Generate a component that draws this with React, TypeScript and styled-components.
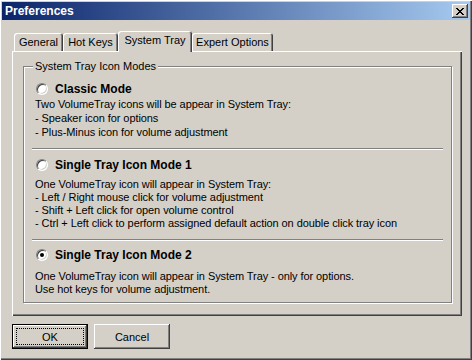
import React from "react";
import styled, { createGlobalStyle } from "styled-components";

const GlobalStyle = createGlobalStyle`
  html, body { margin: 0; padding: 0; background: #d4d0c8; }
  body {
    font-family: "Liberation Sans", Arial, sans-serif;
    font-size: 11px;
    color: #000;
  }
  * { box-sizing: border-box; }
`;

const Window = styled.div`
  width: 472px;
  height: 360px;
  padding: 2px;
  background: #d4d0c8;
  box-shadow: inset 1px 1px #ffffff, inset -1px -1px #404040, inset -2px -2px #808080;
  display: flex;
  flex-direction: column;
`;

const TitleBar = styled.div`
  height: 18px;
  flex: none;
  display: flex;
  align-items: center;
  justify-content: space-between;
  padding: 0 2px 0 3px;
  background: linear-gradient(to right, #0a246a, #a6caf0);
  color: #ffffff;
  font-weight: bold;
  font-size: 12px;
`;

const CloseButton = styled.div`
  width: 16px;
  height: 14px;
  background: #d4d0c8;
  display: flex;
  align-items: center;
  justify-content: center;
  box-shadow: inset -1px -1px #404040, inset 1px 1px #ffffff, inset -2px -2px #808080;
`;

const Body = styled.div`
  flex: 1;
  display: flex;
  flex-direction: column;
  padding: 11px 8px 0 10px;
`;

const TabRow = styled.div`
  display: flex;
  align-items: flex-end;
  height: 20px;
  padding-left: 2px;
  position: relative;
  z-index: 1;
`;

const Tab = styled.div<{ $active?: boolean; $w: number }>`
  width: ${(p) => p.$w}px;
  height: ${(p) => (p.$active ? 21 : 18)}px;
  margin-bottom: ${(p) => (p.$active ? -1 : 0)}px;
  padding-bottom: ${(p) => (p.$active ? 3 : 0)}px;
  background: #d4d0c8;
  border-radius: 3px 3px 0 0;
  box-shadow: inset 1px 1px #ffffff, inset -1px 0 #404040, inset -2px 0 #808080;
  display: flex;
  align-items: center;
  justify-content: center;
  white-space: nowrap;
`;

const Panel = styled.div`
  height: 265px;
  flex: none;
  padding: 15px 0 0 11px;
  box-shadow: inset 1px 1px #ffffff, inset -1px -1px #404040, inset -2px -2px #808080;
`;

const GroupBox = styled.div`
  position: relative;
  width: 429px;
  height: 237px;
  border: 1px solid #808080;
  box-shadow: inset 1px 1px #ffffff, 1px 1px 0 #ffffff;
  padding: 0 8px;
  display: flex;
  flex-direction: column;
`;

const GroupLabel = styled.div`
  position: absolute;
  top: -8px;
  left: 9px;
  padding: 0 2px;
  line-height: 14px;
  background: #d4d0c8;
  white-space: nowrap;
`;

const OptionRow = styled.div<{ $mt: number }>`
  display: flex;
  align-items: center;
  gap: 7px;
  height: 14px;
  margin-top: ${(p) => p.$mt}px;
  padding-left: 4px;
`;

const Radio = styled.span<{ $checked?: boolean }>`
  position: relative;
  width: 12px;
  height: 12px;
  flex: none;
  border-radius: 50%;
  border: 1px solid;
  border-color: #808080 #ffffff #ffffff #808080;
  background: #ffffff;
  box-shadow: inset 1px 1px #404040, inset -1px -1px #d4d0c8;
  &::after {
    content: "";
    display: ${(p) => (p.$checked ? "block" : "none")};
    position: absolute;
    left: 3px;
    top: 3px;
    width: 4px;
    height: 4px;
    border-radius: 50%;
    background: #000000;
  }
`;

const OptionLabel = styled.span`
  font-weight: bold;
  font-size: 12px;
  white-space: nowrap;
`;

const Desc = styled.div<{ $mt: number; $lh: number }>`
  margin-top: ${(p) => p.$mt}px;
  padding-left: 3px;
  line-height: ${(p) => p.$lh}px;
  letter-spacing: -0.08px;
  white-space: nowrap;
`;

const Separator = styled.div<{ $mt: number }>`
  height: 2px;
  margin-top: ${(p) => p.$mt}px;
  border-top: 1px solid #808080;
  border-bottom: 1px solid #ffffff;
`;

const ButtonRow = styled.div`
  display: flex;
  gap: 6px;
  margin-top: 8px;
`;

const Button = styled.button<{ $default?: boolean }>`
  position: relative;
  width: 76px;
  height: 25px;
  padding: 0;
  font-family: inherit;
  font-size: 11px;
  color: #000;
  background: #d4d0c8;
  border: ${(p) => (p.$default ? "1px solid #000000" : "none")};
  box-shadow: inset -1px -1px #404040, inset 1px 1px #ffffff, inset -2px -2px #808080;
  &::after {
    content: "";
    display: ${(p) => (p.$default ? "block" : "none")};
    position: absolute;
    inset: 3px;
    border: 1px dotted #000000;
  }
`;

const CloseGlyph = () => {
  const rows = [
    "XX....XX",
    ".XX..XX.",
    "..XXXX..",
    "...XX...",
    "..XXXX..",
    ".XX..XX.",
    "XX....XX",
  ];
  return (
    <svg width="8" height="7" viewBox="0 0 8 7" shapeRendering="crispEdges">
      {rows.flatMap((r, y) =>
        r.split("").map((c, x) =>
          c === "X" ? <rect key={`${x}-${y}`} x={x} y={y} width="1" height="1" fill="#000" /> : null
        )
      )}
    </svg>
  );
};

type Mode = {
  label: string;
  checked?: boolean;
  rowMt: number;
  descMt: number;
  lh: number;
  sepMt?: number;
  lines: string[];
};

const modes: Mode[] = [
  {
    label: "Classic Mode",
    rowMt: 15,
    descMt: 1,
    lh: 14,
    lines: [
      "Two VolumeTray icons will be appear in System Tray:",
      "- Speaker icon for options",
      "- Plus-Minus icon for volume adjustment",
    ],
  },
  {
    label: "Single Tray Icon Mode 1",
    sepMt: 9,
    rowMt: 8,
    descMt: 6,
    lh: 13,
    lines: [
      "One VolumeTray icon will appear in System Tray:",
      "- Left / Right mouse click for volume adjustment",
      "- Shift + Left click for open volume control",
      "- Ctrl + Left click to perform assigned default action on double click tray icon",
    ],
  },
  {
    label: "Single Tray Icon Mode 2",
    checked: true,
    sepMt: 9,
    rowMt: 7,
    descMt: 8,
    lh: 13,
    lines: [
      "One VolumeTray icon will appear in System Tray - only for options.",
      "Use hot keys for volume adjustment.",
    ],
  },
];

const tabs = [
  { label: "General", w: 49 },
  { label: "Hot Keys", w: 55 },
  { label: "System Tray", w: 74, active: true },
  { label: "Expert Options", w: 81 },
];

export default function App() {
  return (
    <>
      <GlobalStyle />
      <Window>
        <TitleBar>
          <span>Preferences</span>
          <CloseButton>
            <CloseGlyph />
          </CloseButton>
        </TitleBar>
        <Body>
          <TabRow>
            {tabs.map((t) => (
              <Tab key={t.label} $w={t.w} $active={t.active}>
                {t.label}
              </Tab>
            ))}
          </TabRow>
          <Panel>
            <GroupBox>
              <GroupLabel>System Tray Icon Modes</GroupLabel>
              {modes.map((m) => (
                <React.Fragment key={m.label}>
                  {m.sepMt !== undefined && <Separator $mt={m.sepMt} />}
                  <OptionRow $mt={m.rowMt}>
                    <Radio $checked={m.checked} />
                    <OptionLabel>{m.label}</OptionLabel>
                  </OptionRow>
                  <Desc $mt={m.descMt} $lh={m.lh}>
                    {m.lines.map((l) => (
                      <div key={l}>{l}</div>
                    ))}
                  </Desc>
                </React.Fragment>
              ))}
            </GroupBox>
          </Panel>
          <ButtonRow>
            <Button $default>OK</Button>
            <Button>Cancel</Button>
          </ButtonRow>
        </Body>
      </Window>
    </>
  );
}
